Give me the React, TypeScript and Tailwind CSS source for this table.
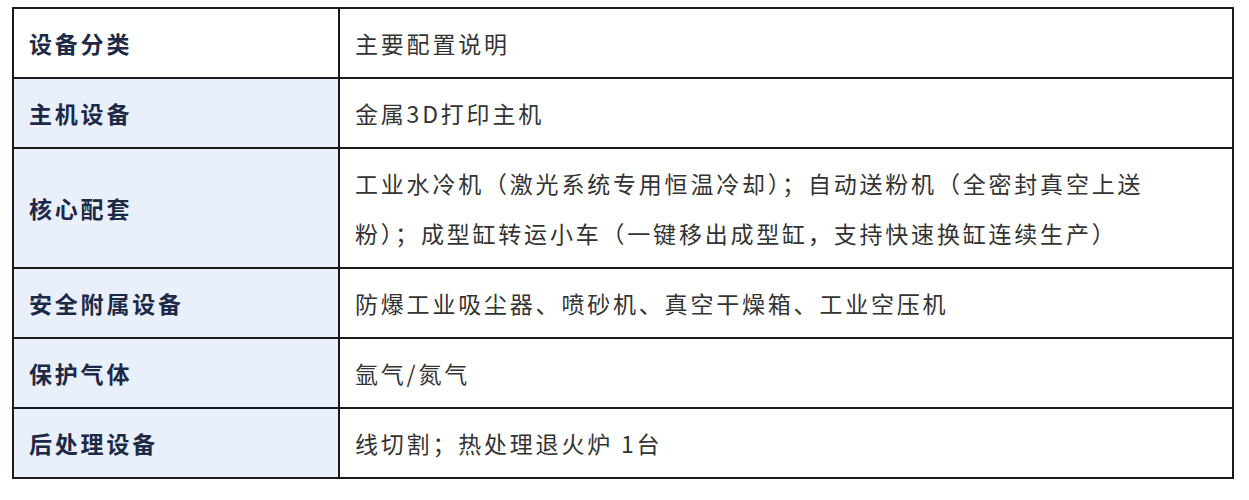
const rows: { label: string; content: string; head?: boolean }[] = [
  { label: "设备分类", content: "主要配置说明", head: true },
  { label: "主机设备", content: "金属3D打印主机" },
  {
    label: "核心配套",
    content:
      "工业水冷机（激光系统专用恒温冷却）；自动送粉机（全密封真空上送粉）；成型缸转运小车（一键移出成型缸，支持快速换缸连续生产）",
  },
  { label: "安全附属设备", content: "防爆工业吸尘器、喷砂机、真空干燥箱、工业空压机" },
  { label: "保护气体", content: "氩气/氮气" },
  { label: "后处理设备", content: "线切割；热处理退火炉 1台" },
];

export default function App() {
  return (
    <div className="min-h-screen bg-white pt-[7px] pl-[12px]" style={{ fontFamily: '"Noto Sans CJK SC", "Noto Sans", sans-serif' }}>
      <table className="w-[1222px] border-collapse border-2 border-[#1a1a1a] text-[23px] tracking-[2.8px]">
        <tbody>
          {rows.map((r) => (
            <tr key={r.label}>
              <td
                className={`w-[326px] border-2 border-[#1a1a1a] px-[15px] py-[9px] font-bold leading-[50px] text-[#1c2a47] ${
                  r.head ? "bg-white" : "bg-[#e9f0fc]"
                }`}
              >
                {r.label}
              </td>
              <td className="border-2 border-[#1a1a1a] pl-[15px] pr-[64px] py-[9px] leading-[50px] text-[#333333]">
                {r.content}
              </td>
            </tr>
          ))}
        </tbody>
      </table>
    </div>
  );
}
